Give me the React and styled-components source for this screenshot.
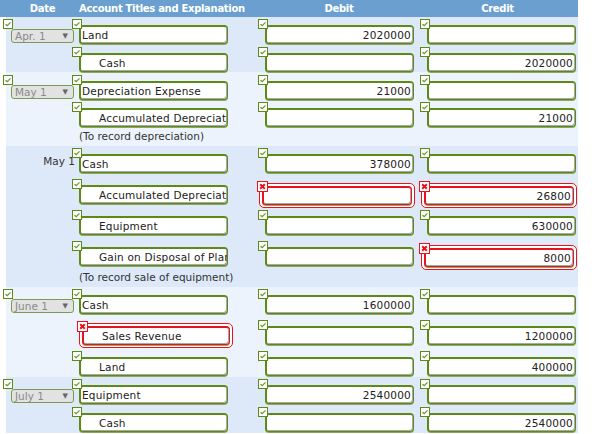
import React from 'react';
import styled, { createGlobalStyle } from 'styled-components';

const GlobalStyle = createGlobalStyle`
  html, body {
    margin: 0;
    padding: 0;
    background: #ffffff;
  }
  body {
    font-family: "DejaVu Sans", Verdana, sans-serif;
    font-size: 10.5px;
    color: #222;
  }
`;

const Page = styled.div`
  width: 594px;
  height: 434px;
  overflow: hidden;
`;

const Header = styled.div`
  display: grid;
  grid-template-columns: 79px 179px 162px 155px;
  width: 578px;
  height: 17px;
  background: #6b9fcf;
  color: #ffffff;
  font-weight: bold;
  font-size: 10px;
  letter-spacing: -0.3px;
  line-height: 17px;
`;

const HeadCell = styled.div`
  text-align: ${(p) => p.align || 'center'};
  padding-left: ${(p) => (p.align === 'left' ? '0' : p.pl || '0')};
  white-space: nowrap;
`;

const Body = styled.div`
  width: 572px;
  margin-left: 6px;
`;

const Group = styled.div`
  background: ${(p) => (p.light ? '#ecf3fc' : '#dde9f8')};
`;

const Row = styled.div`
  display: grid;
  grid-template-columns: 73px 186px 162px 148px;
  align-items: start;
  height: ${(p) => p.h}px;
  padding-top: ${(p) => p.pt || 8}px;
  box-sizing: border-box;
`;

const Note = styled.div`
  height: ${(p) => p.h}px;
  line-height: ${(p) => p.h - 2}px;
  padding-left: 73px;
  color: #333;
`;

const Cell = styled.div`
  position: relative;
`;

const DateText = styled.div`
  text-align: right;
  padding-right: 4px;
  margin-top: 1px;
  color: #333;
`;

const Select = styled.div`
  position: relative;
  margin: 4px 0 0 5px;
  width: 63px;
  height: 14px;
  box-sizing: border-box;
  border: 1px solid #7d9a55;
  border-radius: 3px;
  background: #e2e2e2;
  color: #8a8a8a;
  display: flex;
  align-items: center;
  justify-content: space-between;
  padding: 0 5px 0 3px;
  line-height: 12px;
`;

const Arrow = styled.span`
  font-size: 7px;
  color: #666;
`;

const Input = styled.div`
  position: relative;
  width: ${(p) => p.w || 149}px;
  height: 19px;
  box-sizing: border-box;
  border: 1px solid #5c8a14;
  border-top-width: 2px;
  border-left-width: 2px;
  border-radius: 4px;
  background: #ffffff;
  box-shadow: inset -1px -1px 0 #a8a8a8, 0 1px 0 #8aa860;
  padding: 0 ${(p) => (p.num ? 2 : 1)}px 0 ${(p) => (p.indent ? 18 : 1)}px;
  text-align: ${(p) => (p.num ? 'right' : 'left')};
  line-height: 16px;
  white-space: nowrap;
  overflow: hidden;
  letter-spacing: 0.2px;
`;

const ErrorWrap = styled.div`
  position: relative;
  margin: ${(p) => (p.acc ? '-3px 0 0 0' : '-2px 0 0 -6px')};
  width: fit-content;
  padding: 2px;
  border: 1px solid #e8141b;
  border-radius: 5px;
  background: #ffffff;

  & > div {
    border-color: #e8141b;
  }
`;

const Badge = styled.span`
  position: absolute;
  left: ${(p) => p.x}px;
  top: ${(p) => p.y}px;
  width: ${(p) => (p.bad ? 11 : 10)}px;
  height: ${(p) => (p.bad ? 11 : 10)}px;
  box-sizing: border-box;
  border: 1px solid ${(p) => (p.bad ? '#e8141b' : '#5c8a14')};
  background: #ffffff;
  z-index: 2;
  display: block;

  svg {
    display: block;
  }
`;

const Tick = () => (
  <svg width="8" height="8" viewBox="0 0 8 8">
    <path d="M1.5 4.2 L3.2 5.6 L6.5 2.4" fill="none" stroke="#6b9a2c" strokeWidth="1.3" />
  </svg>
);

const Check = ({ x = -7, y = -6 }) => (
  <Badge x={x} y={y}>
    <Tick />
  </Badge>
);

const Cross = ({ x = -3, y = -3 }) => (
  <Badge x={x} y={y} bad>
    <svg width="9" height="9" viewBox="0 0 9 9">
      <path d="M2.2 2.2 L6.8 6.8 M6.8 2.2 L2.2 6.8" fill="none" stroke="#e8141b" strokeWidth="2" />
    </svg>
  </Badge>
);

const Field = ({ text, num, indent, bad, acc }) => {
  if (bad) {
    return (
      <ErrorWrap acc={acc}>
        <Cross />
        <Input num={num} indent={indent} w={acc ? 148 : 150}>
          {text}
        </Input>
      </ErrorWrap>
    );
  }
  return (
    <Cell>
      <Check />
      <Input num={num} indent={indent}>
        {text}
      </Input>
    </Cell>
  );
};

const DateField = ({ date, plain }) => {
  if (plain) return <DateText>{date}</DateText>;
  if (!date) return <div />;
  return (
    <Cell>
      <Select>
        <Check x={-9} y={-11} />
        <span>{date}</span>
        <Arrow>▼</Arrow>
      </Select>
    </Cell>
  );
};

const groups = [
  {
    light: false,
    rows: [
      { h: 28, date: 'Apr. 1', acc: 'Land', debit: '2020000', credit: '' },
      { h: 27, acc: 'Cash', indent: true, debit: '', credit: '2020000' },
    ],
  },
  {
    light: true,
    rows: [
      { h: 28, pt: 9, date: 'May 1', acc: 'Depreciation Expense', debit: '21000', credit: '' },
      { h: 28, acc: 'Accumulated Depreciation', indent: true, debit: '', credit: '21000' },
    ],
    note: { h: 18, text: '(To record depreciation)' },
  },
  {
    light: false,
    rows: [
      { h: 31, pt: 8, date: 'May 1', plain: true, acc: 'Cash', debit: '378000', credit: '' },
      { h: 31, acc: 'Accumulated Depreciation', indent: true, debit: '', credit: '26800', debitBad: true, creditBad: true },
      { h: 31, acc: 'Equipment', indent: true, debit: '', credit: '630000' },
      { h: 31, acc: 'Gain on Disposal of Plant Assets', indent: true, debit: '', credit: '8000', creditBad: true },
    ],
    note: { h: 17, text: '(To record sale of equipment)' },
  },
  {
    light: true,
    rows: [
      { h: 31, date: 'June 1', acc: 'Cash', debit: '1600000', credit: '' },
      { h: 31, acc: 'Sales Revenue', indent: true, accBad: true, debit: '', credit: '1200000' },
      { h: 28, acc: 'Land', indent: true, debit: '', credit: '400000' },
    ],
  },
  {
    light: false,
    rows: [
      { h: 28, date: 'July 1', acc: 'Equipment', debit: '2540000', credit: '' },
      { h: 28, acc: 'Cash', indent: true, debit: '', credit: '2540000' },
    ],
  },
];

export default function App() {
  return (
    <Page>
      <GlobalStyle />
      <Header>
        <HeadCell pl="6px">Date</HeadCell>
        <HeadCell align="left">Account Titles and Explanation</HeadCell>
        <HeadCell>Debit</HeadCell>
        <HeadCell>Credit</HeadCell>
      </Header>
      <Body>
        {groups.map((g, gi) => (
          <Group key={gi} light={g.light}>
            {g.rows.map((r, ri) => (
              <Row key={ri} h={r.h} pt={r.pt}>
                <DateField date={r.date} plain={r.plain} />
                <Field text={r.acc} indent={r.indent} bad={r.accBad} acc />
                <Field text={r.debit} num bad={r.debitBad} />
                <Field text={r.credit} num bad={r.creditBad} />
              </Row>
            ))}
            {g.note && <Note h={g.note.h}>{g.note.text}</Note>}
          </Group>
        ))}
      </Body>
    </Page>
  );
}
